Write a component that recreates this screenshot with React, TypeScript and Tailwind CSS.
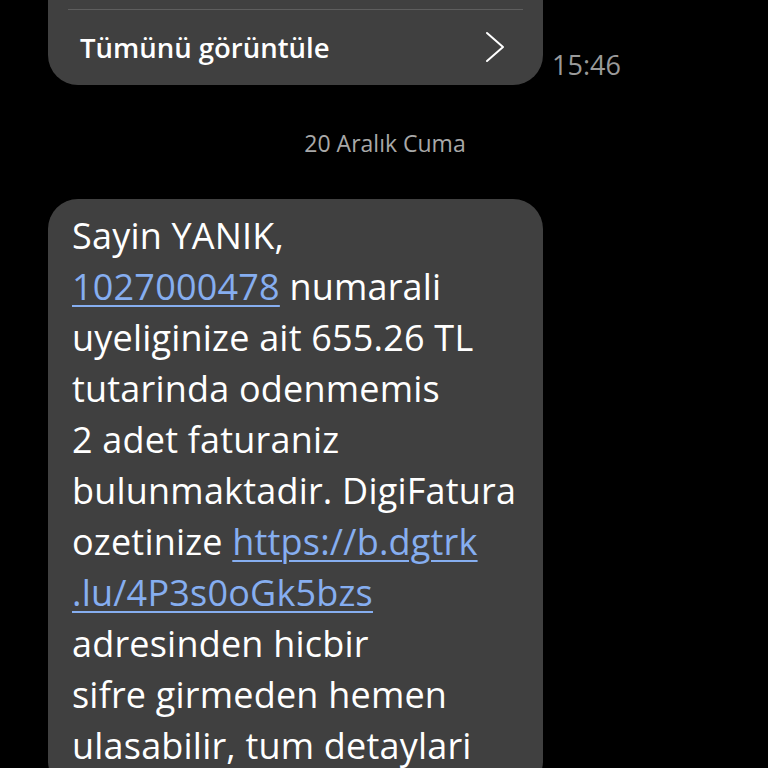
const font = { fontFamily: "'Open Sans', 'Noto Sans', sans-serif" };

function Link({ children }: { children: React.ReactNode }) {
  return (
    <span className="text-[#86aef0] underline decoration-[2px] underline-offset-[5px]">
      {children}
    </span>
  );
}

export default function App() {
  const lines: React.ReactNode[] = [
    "Sayin YANIK,",
    <>
      <Link>1027000478</Link> numarali
    </>,
    "uyeliginize ait 655.26 TL",
    "tutarinda odenmemis",
    "2 adet faturaniz",
    "bulunmaktadir. DigiFatura",
    <>
      ozetinize <Link>https://b.dgtrk</Link>
    </>,
    <Link>.lu/4P3s0oGk5bzs</Link>,
    "adresinden hicbir",
    "sifre girmeden hemen",
    "ulasabilir, tum detaylari",
  ];

  return (
    <div className="h-[768px] w-[768px] overflow-hidden bg-black" style={font}>
      {/* previous bubble, cut off at top */}
      <div className="flex items-end gap-[9px] pl-[48px]">
        <div className="w-[495px] rounded-b-[30px] bg-[#404040] pt-[9px]">
          <div className="mx-[20px] h-[1px] bg-[#5e5e5e]" />
          <div className="flex h-[75px] items-center justify-between pl-[32px] pr-[38px]">
            <span className="text-[27.5px] font-semibold text-white">Tümünü görüntüle</span>
            <svg width="20" height="32" viewBox="0 0 20 32" fill="none" className="mb-[2px]">
              <polyline
                points="2,2 18,16 2,30"
                stroke="white"
                strokeWidth="2"
                strokeLinecap="round"
                strokeLinejoin="round"
              />
            </svg>
          </div>
        </div>
        <span className="text-[27px] text-[#9a9a9a]">15:46</span>
      </div>

      {/* date separator */}
      <div className="mt-[41px] flex justify-center pl-[2px]">
        <span className="text-[23px] text-[#a8a8a8]">20 Aralık Cuma</span>
      </div>

      {/* message bubble */}
      <div className="mt-[38px] pl-[48px]">
        <div className="w-[495px] rounded-[30px] bg-[#404040] px-[24px] pt-[11px] pb-[20px]">
          {lines.map((l, i) => (
            <div
              key={i}
              className="text-[36px] leading-[51px] tracking-[0.2px] whitespace-nowrap text-white"
            >
              {l}
            </div>
          ))}
        </div>
      </div>
    </div>
  );
}
